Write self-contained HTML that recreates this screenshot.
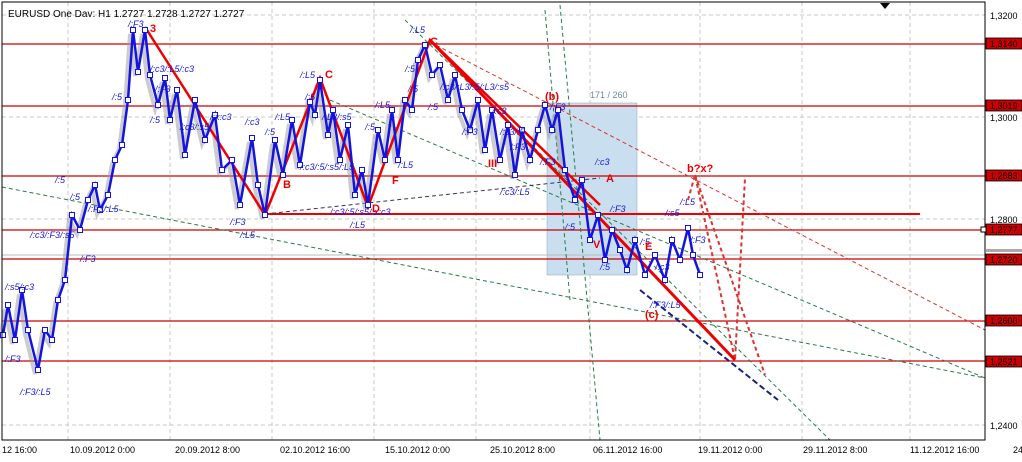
<!DOCTYPE html><html><head><style>body{margin:0;background:#fff;width:1022px;height:457px;overflow:hidden;font-family:"Liberation Sans",sans-serif}</style></head><body>
<svg width="1022" height="457" xmlns="http://www.w3.org/2000/svg" font-family="Liberation Sans, sans-serif">
<defs><marker id="m" markerWidth="6" markerHeight="6" refX="3" refY="3" markerUnits="userSpaceOnUse"><rect x="0.5" y="0.5" width="5" height="5" fill="#fff" stroke="#1414e0" stroke-width="1"/></marker></defs>
<rect width="1022" height="457" fill="#fff"/>
<g stroke="#c8c8c8" stroke-dasharray="4,3" stroke-width="1">
<line x1="68" y1="2" x2="68" y2="440"/><line x1="170" y1="2" x2="170" y2="440"/><line x1="272" y1="2" x2="272" y2="440"/><line x1="374" y1="2" x2="374" y2="440"/><line x1="476" y1="2" x2="476" y2="440"/><line x1="590" y1="2" x2="590" y2="440"/><line x1="700" y1="2" x2="700" y2="440"/><line x1="802" y1="2" x2="802" y2="440"/><line x1="910" y1="2" x2="910" y2="440"/>
<line x1="2" y1="15" x2="985" y2="15"/><line x1="2" y1="117" x2="985" y2="117"/><line x1="2" y1="219" x2="985" y2="219"/><line x1="2" y1="425" x2="985" y2="425"/>
</g>
<rect x="547" y="103" width="90" height="172" fill="#c9deef" stroke="#8aa" stroke-width="0.5"/>
<text x="590" y="98" font-size="9" fill="#6a8aa0">171 / 260</text>
<g stroke="#c00" stroke-width="1.2">
<line x1="2" y1="44" x2="985" y2="44"/><line x1="2" y1="106" x2="985" y2="106"/><line x1="2" y1="176" x2="985" y2="176"/><line x1="2" y1="230" x2="985" y2="230"/><line x1="2" y1="259" x2="985" y2="259"/><line x1="2" y1="321" x2="985" y2="321"/><line x1="2" y1="361" x2="985" y2="361"/>
</g>
<line x1="265" y1="214" x2="920" y2="214" stroke="#e00" stroke-width="2"/>
<line x1="2" y1="255" x2="985" y2="255" stroke="#bbb"/>
<g stroke="#2a7a4a" stroke-dasharray="4,3" fill="none">
<line x1="2" y1="187" x2="985" y2="378"/><line x1="330" y1="100" x2="985" y2="378"/>
<line x1="545" y1="10" x2="570" y2="300"/><line x1="560" y1="5" x2="600" y2="440"/><line x1="405" y1="20" x2="830" y2="440"/><line x1="145" y1="27" x2="265" y2="214"/>
</g>
<g stroke="#d33" stroke-dasharray="4,3" fill="none">
<line x1="430" y1="42" x2="985" y2="330"/>
<polyline points="688,200 695,175 735,360 745,178" stroke-width="2"/>
<polyline points="695,175 765,375" stroke-width="2"/>
</g>
<line x1="265" y1="214" x2="600" y2="178" stroke="#336" stroke-dasharray="4,3"/>
<line x1="640" y1="290" x2="778" y2="400" stroke="#1a237e" stroke-width="2" stroke-dasharray="6,3"/>
<polyline fill="none" stroke="#999" stroke-width="4" opacity="0.5" transform="translate(-3,4)" points="3,335 8,305 15,340 22,290 28,330 38,370 45,330 52,340 58,300 65,280 72,215 80,230 88,200 95,185 100,210 108,195 115,160 122,145 128,100 133,30 138,72 145,30 150,75 158,105 165,78 170,120 177,90 185,155 195,100 205,140 215,115 222,170 232,160 240,205 252,138 258,185 265,215 275,140 283,175 292,120 300,165 310,102 315,115 320,80 328,135 333,110 340,160 348,125 355,195 362,170 368,205 378,130 385,160 392,110 398,160 405,100 412,110 418,60 425,45 432,75 440,65 448,100 455,75 462,110 470,130 478,100 485,150 492,110 500,160 508,125 515,175 522,130 530,160 538,130 545,105 552,130 558,110 565,170"/>
<polyline fill="none" stroke="#e00" stroke-width="2.5" points="145,27 265,215 320,78 368,207 430,40 600,205"/>
<line x1="430" y1="40" x2="735" y2="360" stroke="#e00" stroke-width="3"/>
<polyline fill="none" stroke="#1414e0" stroke-width="2.5" marker-mid="url(#m)" marker-start="url(#m)" marker-end="url(#m)" points="3,335 8,305 15,340 22,290 28,330 38,370 45,330 52,340 58,300 65,280 72,215 80,230 88,200 95,185 100,210 108,195 115,160 122,145 128,100 133,30 138,72 145,30 150,75 158,105 165,78 170,120 177,90 185,155 195,100 205,140 215,115 222,170 232,160 240,205 252,138 258,185 265,215 275,140 283,175 292,120 300,165 310,102 315,115 320,80 328,135 333,110 340,160 348,125 355,195 362,170 368,205 378,130 385,160 392,110 398,160 405,100 412,110 418,60 425,45 432,75 440,65 448,100 455,75 462,110 470,130 478,100 485,150 492,110 500,160 508,125 515,175 522,130 530,160 538,130 545,105 552,130 558,110 565,170 575,200 582,180 590,240 598,215 605,260 612,230 620,250 627,270 635,240 645,275 655,255 665,280 672,240 680,260 688,228 693,255 700,275"/>
<g fill="#1414e0" font-size="9" font-style="italic">
<text x="30" y="238">/:c3/:F3/:s5</text><text x="150" y="72">/:c3/:L5/:c3</text><text x="300" y="78">/:L5</text><text x="410" y="33">/:L5</text><text x="440" y="90">/:c3/:L3/:5/:L3/:s5</text><text x="5" y="290">/:s5/:c3</text><text x="5" y="362">/:F3</text><text x="20" y="395">/:F3/:L5</text><text x="240" y="238">/:L5</text><text x="350" y="228">/:L5</text><text x="300" y="170">/:c3/:5/:s5/:L5</text><text x="500" y="195">/:c3/:L5</text><text x="600" y="270">/:5</text><text x="650" y="308">/:F3/:L5</text><text x="80" y="262">/:F3</text><text x="180" y="130">/:c3/:s5</text>
<text x="112" y="100">/:5</text><text x="128" y="27">/:F3</text><text x="155" y="92">/:F3</text><text x="210" y="120">/:x:c3</text><text x="150" y="123">/:5</text><text x="70" y="200">/:5</text><text x="55" y="183">/:5</text><text x="88" y="212">/:F3/:L5</text><text x="230" y="225">/:F3</text><text x="245" y="125">/:c3</text><text x="265" y="135">/:5</text><text x="275" y="120">/:L5</text><text x="305" y="100">/:5</text><text x="322" y="120">/:L3/:s5</text><text x="330" y="215">/:c3/:5/:s5/:x:c3</text><text x="375" y="108">/:L5</text><text x="365" y="130">/:5</text><text x="398" y="168">/:L5</text><text x="405" y="72">/:5</text><text x="408" y="92">/:5</text><text x="428" y="110">/:5</text><text x="462" y="135">/:F3</text><text x="492" y="114">/:c3</text><text x="500" y="135">/:c3/:5</text><text x="510" y="150">/:F3</text><text x="550" y="110">/:F3</text><text x="595" y="165">/:c3</text><text x="565" y="230">/:5</text><text x="610" y="212">/:F3</text><text x="640" y="245">/:5</text><text x="655" y="270">/:c3</text><text x="665" y="216">/:s5</text><text x="680" y="205">/:L5</text><text x="690" y="243">/:F3</text><text x="540" y="165">/:F3</text>
</g>
<g fill="#e00" font-size="11" font-weight="bold">
<text x="150" y="32">3</text><text x="325" y="78">C</text><text x="430" y="45">C</text><text x="283" y="188">B</text><text x="372" y="212">D</text><text x="392" y="184">F</text><text x="545" y="100">(b)</text><text x="606" y="182">A</text><text x="687" y="172">b?x?</text><text x="488" y="167">III</text><text x="645" y="318">(c)</text><text x="645" y="250">E</text><text x="593" y="248">V</text>
</g>
<rect x="2" y="2" width="983" height="438" fill="none" stroke="#000"/>
<polygon points="880,3 890,3 885,9" fill="#000"/>
<text x="8" y="17" font-size="10">EURUSD  One  Dav: H1  1.2727  1.2728  1.2727  1.2727</text>
<g font-size="9" fill="#000">
<text x="990" y="19">1,3200</text><text x="990" y="121">1,3000</text><text x="990" y="223">1,2800</text><text x="990" y="429">1,2400</text>
</g>
<g font-size="9" fill="#000" stroke-width="0.8">
<rect x="986" y="38" width="36" height="11" fill="#c00" stroke="#000"/><text x="990" y="47">1,3140</text>
<rect x="986" y="100" width="36" height="11" fill="#c00" stroke="#000"/><text x="990" y="109">1,3019</text>
<rect x="986" y="170" width="36" height="11" fill="#c00" stroke="#000"/><text x="990" y="179">1,2883</text>
<rect x="986" y="224" width="36" height="11" fill="#c00" stroke="#000"/><text x="990" y="233">1,2777</text>
<rect x="986" y="249" width="36" height="3" fill="#aaa"/>
<rect x="986" y="254" width="36" height="11" fill="#c00" stroke="#000"/><text x="990" y="263">1,2720</text>
<rect x="986" y="315" width="36" height="11" fill="#c00" stroke="#000"/><text x="990" y="324">1,2600</text>
<rect x="986" y="356" width="36" height="11" fill="#c00" stroke="#000"/><text x="990" y="365">1,2521</text>
</g>
<rect x="981" y="227" width="5" height="5" fill="#fff" stroke="#000"/>
<g font-size="9" fill="#000">
<text x="2" y="453">12 16:00</text><text x="70" y="453">10.09.2012 0:00</text><text x="175" y="453">20.09.2012 8:00</text><text x="280" y="453">02.10.2012 16:00</text><text x="385" y="453">15.10.2012 0:00</text><text x="490" y="453">25.10.2012 8:00</text><text x="593" y="453">06.11.2012 16:00</text><text x="698" y="453">19.11.2012 0:00</text><text x="803" y="453">29.11.2012 8:00</text><text x="910" y="453">11.12.2012 16:00</text><text x="1013" y="453">24</text>
</g>
</svg></body></html>
